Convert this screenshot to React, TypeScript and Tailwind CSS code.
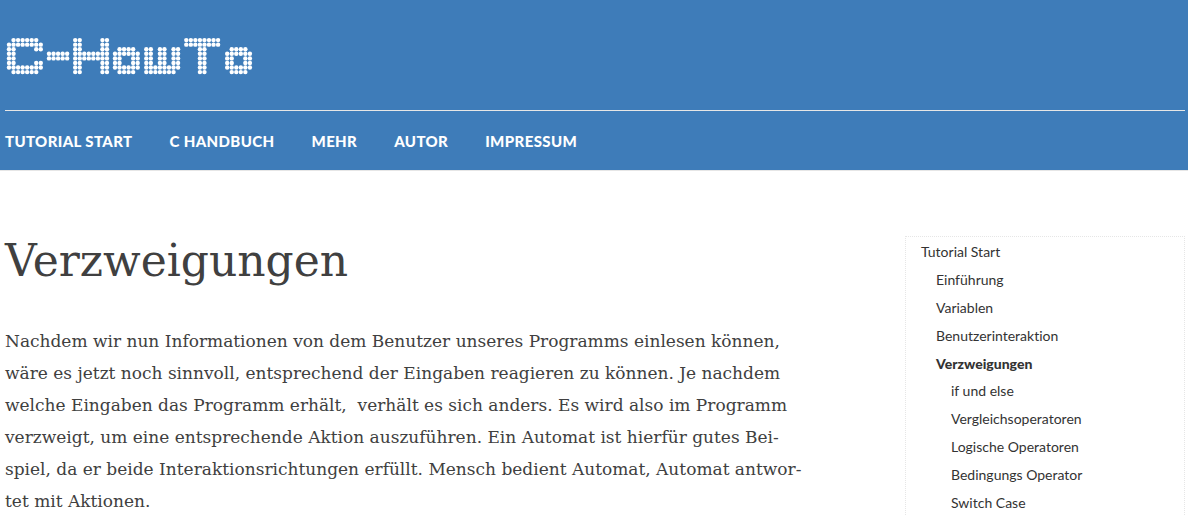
const LETTERS: { x: number; rows: string[] }[] = [
  { x: 4, rows: [".######.", "########", "##....##", "##......", "##......", "##....##", "########", ".######."] },
  { x: 44, rows: ["", "", "", "#####", "#####", "", "", ""] },
  { x: 70.2, rows: ["##....##", "##....##", "##....##", "########", "########", "##....##", "##....##", "##....##"] },
  { x: 110, rows: ["", "", ".####.", "######", "##..##", "##..##", "######", ".####."] },
  { x: 141.3, rows: ["", "", "##.##.##", "##.##.##", "##.##.##", "##.##.##", "########", "#######."] },
  { x: 181.3, rows: ["########", "########", "...##...", "...##...", "...##...", "...##...", "...##...", "...##..."] },
  { x: 222.2, rows: ["", "", ".####.", "######", "##..##", "##..##", "######", ".####."] },
];

const PITCH_X = 4.54;
const PITCH_Y = 4.57;

function Logo() {
  return (
    <svg role="img" aria-label="C-HowTo" width="252" height="40" viewBox="0 0 252 40" className="block fill-white">
      {LETTERS.map((letter, l) =>
        letter.rows.map((row, r) =>
          row.split("").map((cell, c) =>
            cell === "#" ? (
              <circle key={`${l}-${r}-${c}`} cx={letter.x + c * PITCH_X} cy={4.1 + r * PITCH_Y} r={2.2} />
            ) : null,
          ),
        ),
      )}
    </svg>
  );
}

const NAV = ["Tutorial Start", "C Handbuch", "Mehr", "Autor", "Impressum"];

const TOPICS = ["Einführung", "Variablen", "Benutzerinteraktion"];

const SUBTOPICS = [
  "if und else",
  "Vergleichsoperatoren",
  "Logische Operatoren",
  "Bedingungs Operator",
  "Switch Case",
];

function SideLink({ label }: { label: string }) {
  return (
    <li>
      <a href="#" className="block leading-7">
        {label}
      </a>
    </li>
  );
}

export default function App() {
  return (
    <div className="bg-white font-['Lato',sans-serif] text-[#333] [font-variant-ligatures:none]">
      <header className="border-b border-[#e6e6e6] bg-[#3e7cb9] pr-[3px] pl-[5px]">
        <div className="border-b border-[#e6e6e6] pt-9 pb-[34px]">
          <a href="#" className="inline-block align-top">
            <Logo />
          </a>
        </div>
        <nav className="flex gap-[37px] pt-5 pb-[19px] text-[15px] leading-5 font-black tracking-wide text-white uppercase">
          {NAV.map((label) => (
            <a key={label} href="#">
              {label}
            </a>
          ))}
        </nav>
      </header>
      <div className="flex items-start justify-between pr-[3px] pl-[5px]">
        <main className="pt-[60px] font-['DejaVu_Serif',serif] text-[#404040]">
          <h1 className="text-[44px] leading-[60px]">Verzweigungen</h1>
          <p className="mt-[34px] text-[17px] leading-8 whitespace-pre">
            Nachdem wir nun Informationen von dem Benutzer unseres Programms einlesen können,
            <br />
            wäre es jetzt noch sinnvoll, entsprechend der Eingaben reagieren zu können. Je nachdem
            <br />
            welche Eingaben das Programm erhält,&nbsp; verhält es sich anders. Es wird also im Programm
            <br />
            verzweigt, um eine entsprechende Aktion auszuführen. Ein Automat ist hierfür gutes Bei-
            <br />
            spiel, da er beide Interaktionsrichtungen erfüllt. Mensch bedient Automat, Automat antwor-
            <br />
            tet mit Aktionen.
          </p>
        </main>
        <aside className="mt-[65px] w-[280px] shrink-0 border border-b-0 border-dotted border-[#e6e6e6] pt-px pl-[15px] text-[14px]">
          <ul>
            <li>
              <a href="#" className="block leading-7">
                Tutorial Start
              </a>
              <ul className="pl-[15px]">
                {TOPICS.map((label) => (
                  <SideLink key={label} label={label} />
                ))}
                <li>
                  <a href="#" aria-current="page" className="block leading-[27px] font-black">
                    Verzweigungen
                  </a>
                  <ul className="pl-[15px]">
                    {SUBTOPICS.map((label) => (
                      <SideLink key={label} label={label} />
                    ))}
                  </ul>
                </li>
              </ul>
            </li>
          </ul>
        </aside>
      </div>
    </div>
  );
}
